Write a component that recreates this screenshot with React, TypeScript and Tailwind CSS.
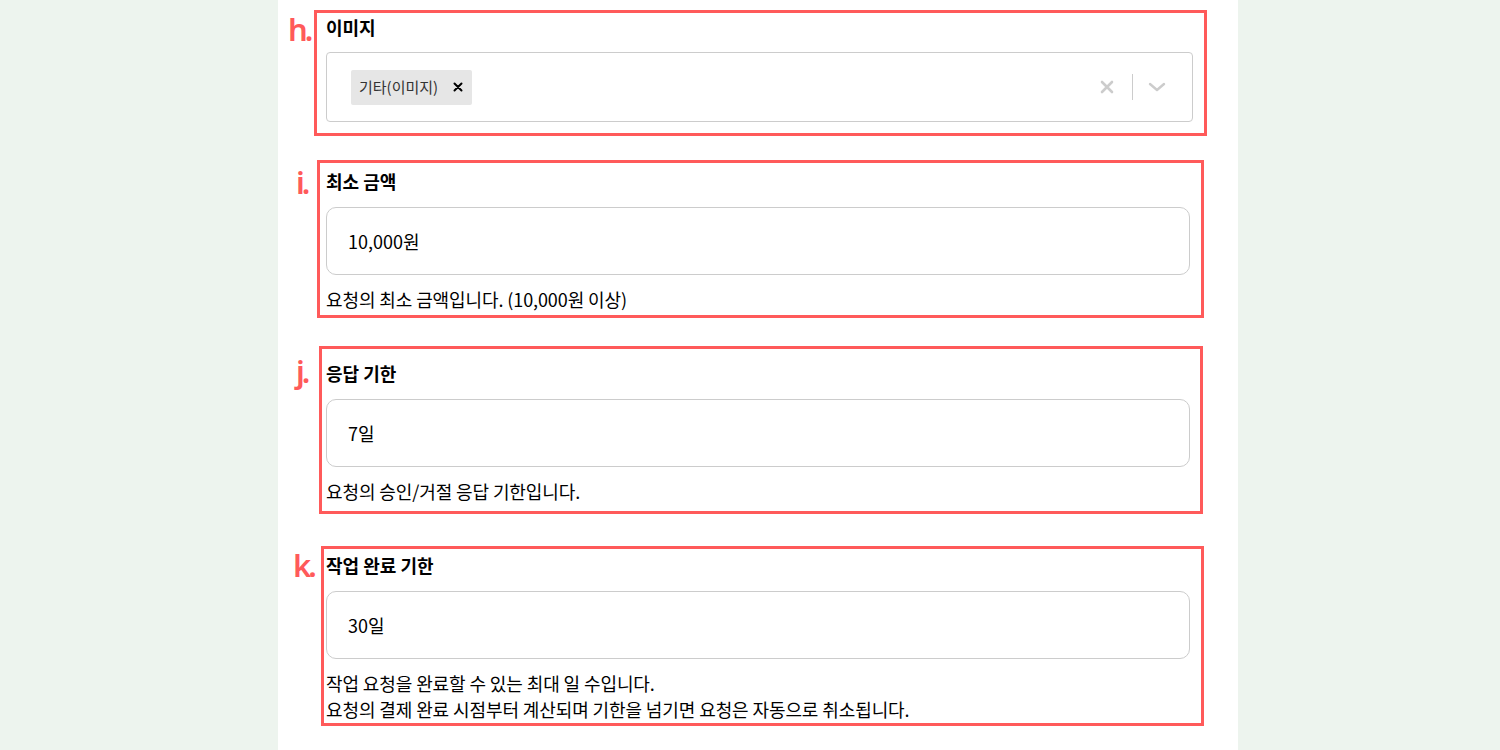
import { ReactNode } from "react";

type Mark = {
  letter: string;
  box: string;
  tag: string;
};

const Annotation = ({ mark }: { mark: Mark }) => (
  <>
    <div className={`pointer-events-none absolute border-[3px] border-[#ff5a5a] ${mark.box}`}></div>
    <span
      className={`absolute font-['Noto_Sans',sans-serif] text-[31px] font-semibold leading-none tracking-[-3px] text-[#ff5a5a] ${mark.tag}`}
    >
      {mark.letter}
    </span>
  </>
);

const Field = ({
  label,
  mark,
  children,
  helper,
}: {
  label: string;
  mark: Mark;
  children: ReactNode;
  helper?: ReactNode;
}) => (
  <div className="relative">
    <Annotation mark={mark} />
    <h3 className="text-[18px] font-bold leading-[26px] text-black">{label}</h3>
    {children}
    {helper && <p className="mt-[11px] text-[18px] leading-[26px] tracking-[-0.1px] text-black">{helper}</p>}
  </div>
);

const TextBox = ({ value }: { value: string }) => (
  <div className="mt-[13px] flex h-[68px] items-center rounded-[10px] border border-[#cccccc] bg-white pl-[21px] text-[18px] text-black">
    {value}
  </div>
);

export default function App() {
  return (
    <div className="min-h-screen bg-[#edf4ee] font-['Noto_Sans_CJK_KR','Noto_Sans',sans-serif]">
      <div className="ml-[278px] h-[750px] w-[960px] bg-white px-[48px] pt-[14px]">
        <Field
          label="이미지"
          mark={{
            letter: "h.",
            box: "-top-[4px] -left-[12px] h-[126px] w-[893px]",
            tag: "top-0 -left-[38px]",
          }}
        >
          <div className="mt-[12px] flex h-[70px] w-[867px] items-center rounded-[4px] border border-[#cccccc] bg-white pl-[24px] pr-[11px]">
            <div className="flex flex-1 items-center">
              <div className="flex h-[35px] items-center rounded-[2px] bg-[#e6e6e6]">
                <span className="pl-[8px] pr-[6px] text-[15px] text-[#333333]">기타(이미지)</span>
                <span className="flex h-full w-[28px] items-center justify-center">
                  <svg width="10" height="10" viewBox="0 0 10 10">
                    <path d="M1.5 1.5l7 7M8.5 1.5l-7 7" stroke="#000" strokeWidth="2" strokeLinecap="round" />
                  </svg>
                </span>
              </div>
            </div>
            <div className="flex items-center">
              <span className="flex w-[50px] items-center justify-center">
                <svg width="14" height="14" viewBox="0 0 14 14">
                  <path d="M2 2l10 10M12 2L2 12" stroke="#cccccc" strokeWidth="2.6" strokeLinecap="round" />
                </svg>
              </span>
              <span className="h-[26px] w-px bg-[#cccccc]"></span>
              <span className="flex w-[48px] items-center justify-center">
                <svg width="18" height="10" viewBox="0 0 18 10">
                  <path d="M2 2l7 6 7-6" fill="none" stroke="#cccccc" strokeWidth="2.4" strokeLinecap="round" strokeLinejoin="round" />
                </svg>
              </span>
            </div>
          </div>
        </Field>

        <div className="mt-[46px]">
          <Field
            label="최소 금액"
            mark={{
              letter: "i.",
              box: "-top-[8px] -left-[9px] h-[158px] w-[887px]",
              tag: "-top-[1px] -left-[30px]",
            }}
            helper="요청의 최소 금액입니다. (10,000원 이상)"
          >
            <TextBox value="10,000원" />
          </Field>
        </div>

        <div className="mt-[48px]">
          <Field
            label="응답 기한"
            mark={{
              letter: "j.",
              box: "-top-[14px] -left-[7px] h-[168px] w-[884px]",
              tag: "-top-[4px] -left-[30px]",
            }}
            helper="요청의 승인/거절 응답 기한입니다."
          >
            <TextBox value="7일" />
          </Field>
        </div>

        <div className="mt-[48px]">
          <Field
            label="작업 완료 기한"
            mark={{
              letter: "k.",
              box: "-top-[6px] -left-[5px] h-[180px] w-[883px]",
              tag: "-top-[2px] -left-[33px]",
            }}
            helper={
              <>
                작업 요청을 완료할 수 있는 최대 일 수입니다.
                <br />
                요청의 결제 완료 시점부터 계산되며 기한을 넘기면 요청은 자동으로 취소됩니다.
              </>
            }
          >
            <TextBox value="30일" />
          </Field>
        </div>
      </div>
    </div>
  );
}
